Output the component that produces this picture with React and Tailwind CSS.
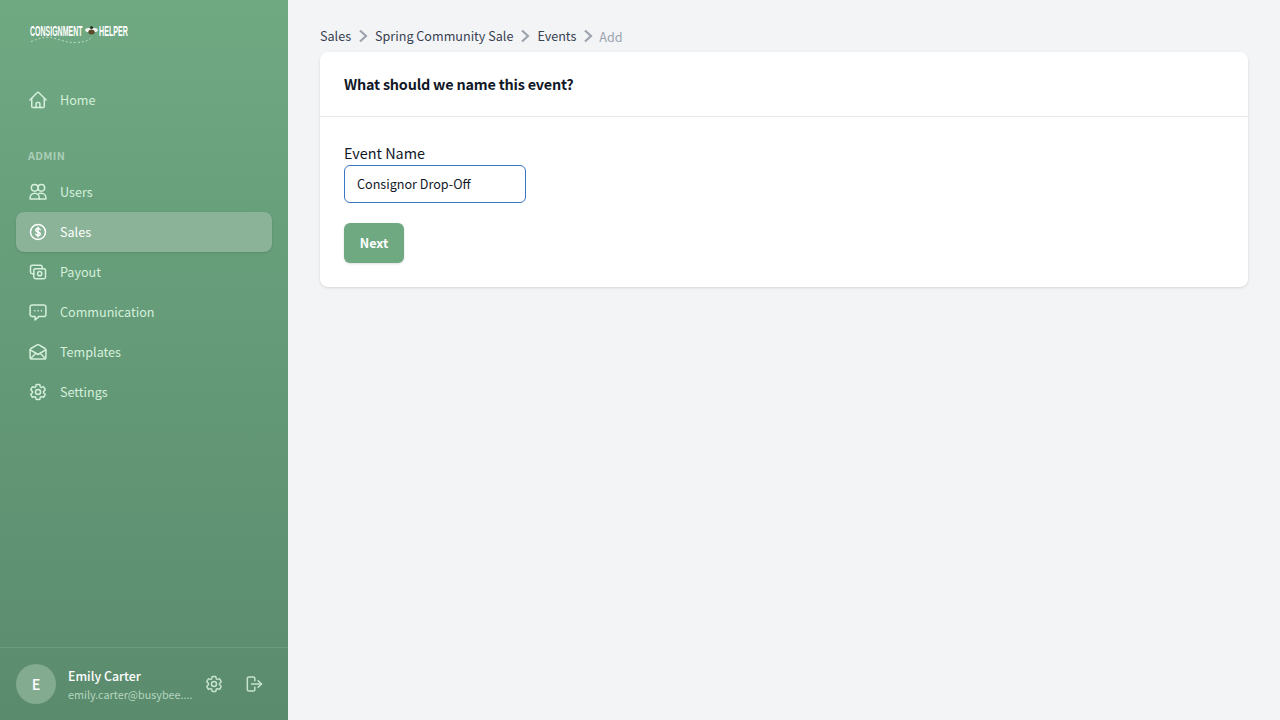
import React from "react";

const P = ({ d, className = "w-5 h-5 shrink-0", sw = 1.8 }) => (
  <svg className={className} viewBox="0 0 24 24" fill="none" stroke="currentColor" strokeWidth={sw} strokeLinecap="round" strokeLinejoin="round">
    {d.map((x, i) => <path key={i} d={x} />)}
  </svg>
);

const gear = ["M9.6 3.9c.1-.5.6-.9 1.1-.9h2.6c.5 0 1 .4 1.1.9l.2 1.4c.1.4.3.7.6.9.1 0 .2.1.2.1.3.2.7.2 1 .1l1.3-.5c.5-.2 1.1 0 1.4.5l1.3 2.2c.3.5.1 1.1-.3 1.4l-1.1.9c-.3.2-.4.6-.4 1v.3c0 .4.1.7.4 1l1.1.9c.4.3.6.9.3 1.4l-1.3 2.2c-.3.5-.9.7-1.4.5l-1.3-.5c-.3-.1-.7-.1-1 .1-.1 0-.2.1-.2.1-.3.2-.5.5-.6.9l-.2 1.4c-.1.5-.6.9-1.1.9h-2.6c-.5 0-1-.4-1.1-.9l-.2-1.4c-.1-.4-.3-.7-.6-.9-.1 0-.2-.1-.2-.1-.3-.2-.7-.2-1-.1l-1.3.5c-.5.2-1.1 0-1.4-.5l-1.3-2.2c-.3-.5-.1-1.1.3-1.4l1.1-.9c.3-.3.4-.6.4-1v-.3c0-.4-.1-.8-.4-1l-1.1-.9c-.4-.3-.6-.9-.3-1.4l1.3-2.2c.3-.5.9-.7 1.4-.5l1.3.5c.3.1.7.1 1-.1.1 0 .2-.1.2-.1.3-.2.5-.5.6-.9z", "M15 12a3 3 0 1 1-6 0 3 3 0 0 1 6 0z"];

const icons = {
  home: ["M2.25 12 11.2 3.05c.44-.44 1.15-.44 1.6 0L21.75 12", "M4.5 9.75v10.13c0 .62.5 1.12 1.13 1.12H9.75v-4.88c0-.62.5-1.12 1.13-1.12h2.25c.62 0 1.12.5 1.12 1.12V21h4.13c.62 0 1.12-.5 1.12-1.12V9.75", "M8.25 21h7.5"],
  users: ["M12 7a4 4 0 1 1-8 0 4 4 0 0 1 8 0z", "M20 7a4 4 0 1 1-8 0 4 4 0 0 1 8 0z", "M2.500 20.500v-1.200C2.500 15.800 5 13.500 8 13.500s5.500 2.300 5.500 5.800v1.200z", "M13 13.900c.9-.3 2-.4 3-.4 3 0 5.500 2.300 5.500 5.800v1.200h-8"],
  dollar: ["M21 12a9 9 0 1 1-18 0 9 9 0 0 1 18 0z", "M14.600 9.300c-.4-.9-1.400-1.500-2.600-1.500-1.500 0-2.700.9-2.700 2.100s1.100 1.800 2.700 2.100 2.700.9 2.700 2.100-1.200 2.100-2.700 2.100c-1.200 0-2.200-.6-2.600-1.500", "M12 6.300v11.400"],
  cash: ["M17 8V6a2 2 0 0 0-2-2H5a2 2 0 0 0-2 2v6a2 2 0 0 0 2 2h2", "M9 20h10a2 2 0 0 0 2-2v-8a2 2 0 0 0-2-2H9a2 2 0 0 0-2 2v8a2 2 0 0 0 2 2z", "M16.500 14a2.500 2.500 0 1 1-5 0 2.500 2.500 0 0 1 5 0z"],
  chat: ["M5 3.500h14a2.500 2.500 0 0 1 2.500 2.500v9a2.500 2.500 0 0 1-2.500 2.500h-6L8.500 21.500v-4H5A2.500 2.500 0 0 1 2.500 15V6A2.500 2.500 0 0 1 5 3.500z", "M8 10.500h.3", "M12 10.500h.3", "M16 10.500h.3"],
  mail: ["M2.500 9.500v9a2 2 0 0 0 2 2h15a2 2 0 0 0 2-2v-9", "M2.500 9.500c0-.7.4-1.300 1-1.700l7.400-4.400a2 2 0 0 1 2.200 0l7.400 4.400c.6.400 1 1 1 1.700", "M2.800 9.500 12 15l9.200-5.500", "M3 20l6.300-6.500", "M21 20l-6.300-6.500"],
  gear,
  logout: ["M13 8V5.500a2 2 0 0 0-2-2H6a2 2 0 0 0-2 2v13a2 2 0 0 0 2 2h5a2 2 0 0 0 2-2V16", "M9 12h12", "M17 8l4 4-4 4"],
};

const NavItem = ({ icon, label, active }) => (
  <div className={`flex items-center gap-3 h-10 px-3 rounded-lg text-[12.6px] ${active ? "bg-[#8ab397] text-white shadow-sm" : "text-[#d5f0dc]"}`}>
    <P d={icons[icon]} />
    <span>{label}</span>
  </div>
);

const Chevron = () => (
  <svg className="w-5 h-5 text-[#9ca3af] mx-[2px]" viewBox="0 0 20 20" fill="none" stroke="currentColor" strokeWidth="2.200" strokeLinejoin="miter">
    <path d="M7 4.500 13 10l-6 5.500" />
  </svg>
);

const Logo = () => (
  <div className="relative h-5 w-[100px] ml-[14px]">
    <div className="flex items-center h-[14px] text-white font-bold text-[14px] leading-none font-['Liberation_Sans',sans-serif]">
      <span className="inline-block w-[54px] origin-left scale-x-[0.5] whitespace-nowrap">CONSIGNMENT</span>
      <svg className="w-[13px] h-[12px] ml-[1px]" viewBox="0 0 13 12">
        <ellipse cx="3.500" cy="5" rx="3.300" ry="2" fill="#f2f7f2" />
        <ellipse cx="9.500" cy="5" rx="3.300" ry="2" fill="#f2f7f2" />
        <ellipse cx="6.500" cy="7" rx="3.200" ry="2.500" fill="#5d4a2a" />
        <circle cx="6.500" cy="2.500" r="1.500" fill="#2b2b22" />
      </svg>
      <span className="inline-block ml-[1px] w-[28px] origin-left scale-x-[0.51] whitespace-nowrap">HELPER</span>
    </div>
    <svg className="absolute left-0 top-[11px] w-[64px] h-[9px]" viewBox="0 0 64 9" fill="none">
      <path d="M1 6.700 C 8 3.500, 15 1.500, 21 2.500 S 36 8, 46 7.500 S 60 5, 62 1" stroke="#dcefe1" strokeWidth="0.700" strokeDasharray="2 2" />
    </svg>
  </div>
);

export default function App() {
  return (
    <div className="flex h-screen bg-[#f3f4f6] font-['Noto_Sans_CJK_JP','Noto_Sans',sans-serif]">
      <aside className="w-[288px] shrink-0 flex flex-col bg-gradient-to-b from-[#6fa982] to-[#5a8b6d]">
        <div className="pt-6 h-20 pl-4"><Logo /></div>
        <nav className="flex-1 px-4">
          <NavItem icon="home" label="Home" />
          <div className="mt-[27px] mb-[9px] h-4 px-3 text-[10.8px] leading-4 font-bold tracking-[0.03em] text-[#aacdb6]">ADMIN</div>
          <NavItem icon="users" label="Users" />
          <NavItem icon="dollar" label="Sales" active />
          <NavItem icon="cash" label="Payout" />
          <NavItem icon="chat" label="Communication" />
          <NavItem icon="mail" label="Templates" />
          <NavItem icon="gear" label="Settings" />
        </nav>
        <div className="border-t border-[#6d9b7e] h-[73px] px-4 flex items-center">
          <div className="w-10 h-10 rounded-full bg-[#82ab90] flex items-center justify-center text-white font-medium text-[14.4px]">E</div>
          <div className="ml-3 w-[127px] min-w-0">
            <div className="text-[12.4px] font-medium leading-5 text-white whitespace-nowrap">Emily Carter</div>
            <div className="text-[10.8px] leading-4 text-[#b5d6bf] whitespace-nowrap">emily.carter@busybee....</div>
          </div>
          <div className="ml-[9px] text-[#c6e3cf]"><P d={icons.gear} /></div>
          <div className="ml-5 text-[#c6e3cf]"><P d={icons.logout} /></div>
        </div>
      </aside>
      <main className="flex-1 min-w-0 px-8 pt-[26px]">
        <div className="flex items-center h-[20px] text-[12.6px] leading-5 text-[#374151]">
          <span>Sales</span>
          <Chevron />
          <span>Spring Community Sale</span>
          <Chevron />
          <span>Events</span>
          <Chevron />
          <span className="text-[#9ca3af] -ml-px mt-[1px]">Add</span>
        </div>
        <section className="mt-[6px] bg-white rounded-lg shadow">
          <div className="h-[65px] px-6 flex items-center border-b border-[#e5e7eb]">
            <h2 className="text-[14.4px] font-bold tracking-[-0.2px] text-[#111827]">What should we name this event?</h2>
          </div>
          <div className="p-6 pt-[24px]">
            <label className="block text-[14.4px] leading-6 text-[#111827]">Event Name</label>
            <input readOnly defaultValue="Consignor Drop-Off" className="block w-[182px] h-[38px] px-3 pb-[2px] text-[12.6px] text-[#111827] bg-white border border-[#3b76c4] rounded-md outline-none" />
            <button className="block mt-5 w-[60px] h-10 rounded-md bg-[#6fa982] text-white text-[12.6px] font-bold shadow-sm">Next</button>
          </div>
        </section>
      </main>
    </div>
  );
}
